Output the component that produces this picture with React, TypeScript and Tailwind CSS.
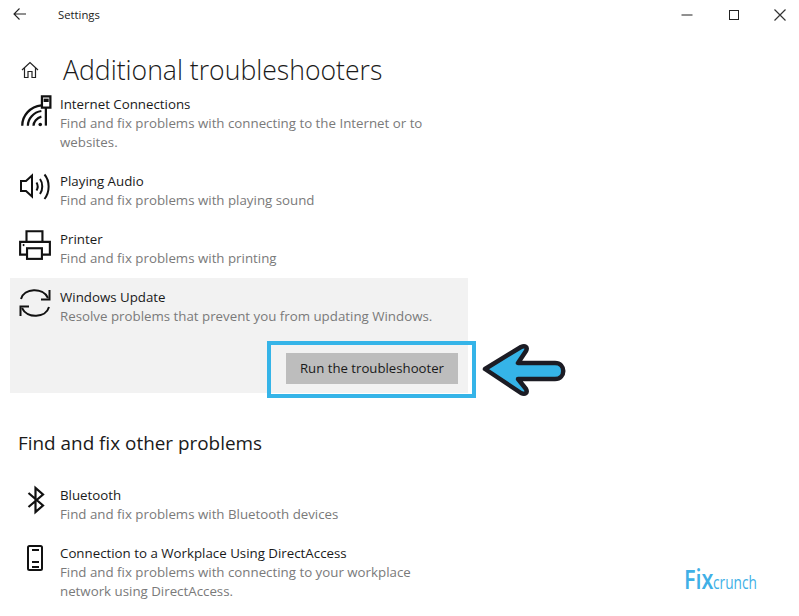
import React from "react";

const font = { fontFamily: '"Open Sans", "Noto Sans", sans-serif' };

function WifiIcon() {
  return (
    <svg width="36" height="36" viewBox="0 0 32 32" fill="none" stroke="#111" strokeWidth="2">
      <path d="M2 29 C2 20 9 12 19 11" />
      <path d="M7 29 C7 23 12 17 19 16" />
      <path d="M12 29 C12 26 15 22 19 21" />
      <circle cx="18" cy="28" r="1.6" fill="#111" stroke="none" />
      <path d="M23 13 V29" />
      <rect x="19.5" y="3" width="7.5" height="10" strokeWidth="2" />
      <rect x="21" y="5" width="4.5" height="3" fill="#111" stroke="none" />
    </svg>
  );
}

function SpeakerIcon() {
  return (
    <svg width="32" height="32" viewBox="0 0 32 32" fill="none" stroke="#111" strokeWidth="2">
      <path d="M2 10 H7 L13 4.5 V25.5 L7 20 H2 Z" />
      <path d="M17.5 11.5 C19 14 19 17 17.5 19.5" />
      <path d="M21 8 C24 12 24 19 21 23" />
      <path d="M25.5 3.5 C31 10 31 21 25.5 28" />
    </svg>
  );
}

function PrinterIcon() {
  return (
    <svg width="34" height="34" viewBox="0 0 32 32" fill="none" stroke="#111" strokeWidth="2">
      <path d="M8 14 V4 H23 V14" />
      <path d="M8 26 H2 V14 H30 V26 H23" />
      <rect x="8.5" y="20" width="14" height="10" />
      <path d="M4.5 17 H6" />
    </svg>
  );
}

function SyncIcon() {
  return (
    <svg width="32" height="32" viewBox="0 0 32 32" fill="none" stroke="#111" strokeWidth="2">
      <path d="M2 12 C5 1 24 0 29 11" />
      <path d="M30.5 3 V12.5 H22" />
      <path d="M30 20 C27 31 8 32 3 21" />
      <path d="M1.5 29 V19.5 H10" />
    </svg>
  );
}

function BluetoothIcon() {
  return (
    <svg width="32" height="32" viewBox="0 0 32 32" fill="none" stroke="#111" strokeWidth="2.2">
      <path d="M8.5 9 L23 21.5 L15.5 28 V4 L23 10.5 L8.5 23" />
    </svg>
  );
}

function PhoneIcon() {
  return (
    <svg width="32" height="32" viewBox="0 0 32 32" fill="none" stroke="#111" strokeWidth="2">
      <rect x="9" y="2" width="14" height="24" rx="1.5" />
      <path d="M13 6 H20" />
      <path d="M13 18 H20 M13 23 H20" />
    </svg>
  );
}

function Row({
  icon,
  title,
  desc,
  iconClass = "",
}: {
  icon: React.ReactNode;
  title: string;
  desc: React.ReactNode;
  iconClass?: string;
}) {
  return (
    <div className="flex">
      <div className="w-[42px] h-[19px] shrink-0">
        <div className={iconClass}>{icon}</div>
      </div>
      <div className="w-[400px]">
        <div className="text-[13.3px] leading-[19px] text-[#1a1a1a]">{title}</div>
        <div className="text-[13.3px] leading-[19px] text-[#7a7a7a]">{desc}</div>
      </div>
    </div>
  );
}

export default function App() {
  return (
    <div style={font} className="relative w-[799px] h-[616px] overflow-hidden bg-white">
      <div className="flex items-center h-[30px]">
        <svg width="16" height="16" viewBox="0 0 16 16" fill="none" stroke="#222" strokeWidth="1.1" className="ml-[12px] -mt-[2px]">
          <path d="M14 8 H2 M7.5 2.5 L2 8 L7.5 13.5" />
        </svg>
        <span className="ml-[30px] text-[11.3px] text-[#222]">Settings</span>
        <div className="ml-auto flex items-center">
          <svg width="12" height="12" viewBox="0 0 12 12" stroke="#222" strokeWidth="1" fill="none" className="mr-[35px]">
            <path d="M0.5 6 H11.5" />
          </svg>
          <svg width="12" height="12" viewBox="0 0 12 12" stroke="#222" strokeWidth="1" fill="none" className="mr-[33px]">
            <rect x="1.5" y="1.5" width="9" height="9" />
          </svg>
          <svg width="14" height="14" viewBox="0 0 14 14" stroke="#333" strokeWidth="1.2" fill="none" className="mr-[12px]">
            <path d="M1.5 1.5 L12.5 12.5 M12.5 1.5 L1.5 12.5" />
          </svg>
        </div>
      </div>

      <div className="flex items-center h-[52px] mt-[14px] pl-[21px]">
        <svg width="18" height="18" viewBox="0 0 18 18" fill="none" stroke="#222" strokeWidth="1.2">
          <path d="M1 9 L9 1.5 L17 9" />
          <path d="M3.5 7 V16.5 H7 V10.5 H11 V16.5 H14.5 V7" />
        </svg>
        <h1 className="ml-[24px] mt-[2px] text-[26.6px] font-light text-[#1a1a1a]">Additional troubleshooters</h1>
      </div>

      <div className="-mt-[1px] flex flex-col">
        <div className="pl-[18px] flex flex-col gap-[20px]">
          <Row
            icon={<WifiIcon />}
            iconClass="-mt-[2px] ml-[2px]"
            title="Internet Connections"
            desc={<>Find and fix problems with connecting to the Internet or to<br />websites.</>}
          />
          <Row icon={<SpeakerIcon />} iconClass="-mt-[1px] ml-[1px]" title="Playing Audio" desc="Find and fix problems with playing sound" />
          <Row icon={<PrinterIcon />} iconClass="-mt-[3px]" title="Printer" desc="Find and fix problems with printing" />
        </div>

        <div className="ml-[10px] mt-[10px] w-[458px] h-[115px] bg-[#f2f2f2] pt-[10px] pl-[8px] relative">
          <Row
            icon={<SyncIcon />}
            iconClass="-mt-[1px] ml-[1px]"
            title="Windows Update"
            desc="Resolve problems that prevent you from updating Windows."
          />
          <button className="absolute left-[276px] top-[75px] w-[172px] h-[31px] bg-[#bdbdbd] text-[13.2px] text-[#1a1a1a]">
            Run the troubleshooter
          </button>
          <div className="absolute left-[257px] top-[63px] w-[209px] h-[57px] border-[4px] border-[#35b4e8]" />
        </div>

        <h2 className="mt-[35px] ml-[18px] text-[18.9px] leading-[30px] text-[#1a1a1a]">Find and fix other problems</h2>

        <div className="mt-[28px] pl-[18px] flex flex-col gap-[20px]">
          <Row icon={<BluetoothIcon />} iconClass="-mt-[2px] ml-[2px]" title="Bluetooth" desc="Find and fix problems with Bluetooth devices" />
          <Row
            icon={<PhoneIcon />}
            iconClass="ml-[1px]"
            title="Connection to a Workplace Using DirectAccess"
            desc={<>Find and fix problems with connecting to your workplace<br />network using DirectAccess.</>}
          />
        </div>
      </div>

      <svg width="90" height="66" viewBox="0 0 90 66" className="absolute left-[479px] top-[338px]">
        <path
          d="M6 31 L42 9 C46 7 49 9 47 13 L39 25 H76 C87 25 87 41 76 41 H39 L47 51 C49 55 46 57 42 55 Z"
          fill="#35b4e8"
          stroke="#1c1c24"
          strokeWidth="4.5"
          strokeLinejoin="round"
        />
      </svg>

      <div className="absolute left-[684px] top-[562px] flex items-baseline text-[#3fb0e6] whitespace-nowrap">
        <span className="block w-[29px] text-[27px] font-semibold leading-[34px] origin-left scale-x-[0.8]">Fix</span>
        <span className="block w-[44px] text-[19px] font-normal leading-[34px] origin-left scale-x-[0.72]">crunch</span>
      </div>
    </div>
  );
}
